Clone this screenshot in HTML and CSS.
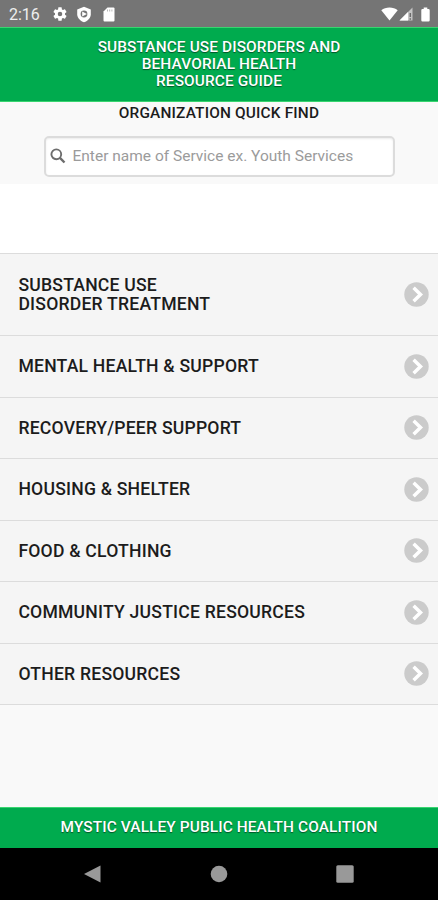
FILE: index.html
```html
<!DOCTYPE html>
<html lang="en">
<head>
<meta charset="utf-8">
<title>Resource Guide</title>
<link rel="stylesheet" href="styles.css">
</head>
<body>
<svg class="defs" width="0" height="0" aria-hidden="true">
  <symbol id="go" viewBox="0 0 25 25">
    <circle cx="12.5" cy="12.5" r="12.2" fill="#cbcbcb"/>
    <path d="M9.6 5.8l6.9 6.7-6.9 6.7" fill="none" stroke="#fff" stroke-width="3.5"/>
  </symbol>
</svg>
<div class="status">
  <span class="time">2:16</span>
  <svg class="gear" width="16" height="16" viewBox="0 0 24 24"><path fill="#fff" fill-rule="evenodd" d="M19.43 12.98c.04-.32.07-.64.07-.98s-.03-.66-.07-.98l2.11-1.65c.19-.15.24-.42.12-.64l-2-3.46c-.12-.22-.39-.3-.61-.22l-2.49 1c-.52-.4-1.08-.73-1.69-.98l-.38-2.65A.49.49 0 0 0 14 2h-4c-.25 0-.46.18-.49.42l-.38 2.65c-.61.25-1.17.59-1.69.98l-2.49-1c-.23-.09-.49 0-.61.22l-2 3.46c-.13.22-.07.49.12.64l2.11 1.65c-.04.32-.07.65-.07.98s.03.66.07.98l-2.11 1.65c-.19.15-.24.42-.12.64l2 3.46c.12.22.39.3.61.22l2.49-1c.52.4 1.08.73 1.69.98l.38 2.65c.03.24.24.42.49.42h4c.25 0 .46-.18.49-.42l.38-2.65c.61-.25 1.17-.59 1.69-.98l2.49 1c.23.09.49 0 .61-.22l2-3.46c.12-.22.07-.49-.12-.64zM12 15.4a3.4 3.4 0 1 1 0-6.8 3.4 3.4 0 0 1 0 6.8z"/></svg>
  <svg class="shield" width="16" height="17" viewBox="0 0 16 17"><path fill="#fff" d="M8 .8l6.800 2.600v4.800c0 3.600-2.800 6.600-6.800 8C4 14.800 1.200 11.800 1.200 8.200V3.400z"/><circle cx="8" cy="8" r="3.400" fill="#757575"/><path fill="#fff" d="M6.200 5.400l4.700 2.600-4.700 2.600z"/></svg>
  <svg class="card" width="12" height="15" viewBox="0 0 12 15"><path fill="#fff" d="M4.500.5H10.500q1 0 1 1v12q0 1-1 1h-9q-1 0-1-1v-9z"/><path stroke="#b8b8b8" d="M4.500 2.500v2M6.700 2.500v2M8.900 2.500v2"/></svg>
  <svg class="wifi" width="17" height="14" viewBox="0 0 17 14"><path fill="#fff" d="M8.500 13.500L.3 3.300C2.500 1.500 5.300.5 8.500.5s6 1 8.200 2.800z"/></svg>
  <svg class="cell" width="14" height="14" viewBox="0 0 14 14"><path fill="#c4c4c4" d="M13.500.5v13H.5z"/><path fill="#fff" d="M9 5v8.500H.5z"/><path stroke="#6b6b6b" stroke-width="1.500" d="M11.300 6v4M11.300 11.300v1.500"/></svg>
  <svg class="battery" width="9" height="15" viewBox="0 0 9 15"><path fill="#fff" d="M2.700.5h3.600V2H7.500q1.200 0 1.200 1.200v10q0 1.300-1.200 1.300h-6Q.3 14.500.3 13.200v-10Q.3 2 1.500 2h1.200z"/></svg>
</div>
<header class="header">
  <h1>SUBSTANCE USE DISORDERS AND<br>BEHAVORIAL HEALTH<br>RESOURCE GUIDE</h1>
</header>
<section class="find">
  <h2>ORGANIZATION QUICK FIND</h2>
  <label class="search">
    <svg width="16" height="16" viewBox="0 0 16 16" fill="none" stroke="#6d6d6d"><circle cx="6.300" cy="6.300" r="4.900" stroke-width="1.900"/><path d="M9.700 9.700l4.800 4.800" stroke-width="2.400"/></svg>
    <input type="text" placeholder="Enter name of Service ex. Youth Services">
  </label>
</section>
<nav class="list">
  <a class="row tall"><span>SUBSTANCE USE<br>DISORDER TREATMENT</span><svg><use href="#go"/></svg></a>
  <a class="row"><span>MENTAL HEALTH &amp; SUPPORT</span><svg><use href="#go"/></svg></a>
  <a class="row"><span>RECOVERY/PEER SUPPORT</span><svg><use href="#go"/></svg></a>
  <a class="row"><span>HOUSING &amp; SHELTER</span><svg><use href="#go"/></svg></a>
  <a class="row"><span>FOOD &amp; CLOTHING</span><svg><use href="#go"/></svg></a>
  <a class="row"><span>COMMUNITY JUSTICE RESOURCES</span><svg><use href="#go"/></svg></a>
  <a class="row"><span>OTHER RESOURCES</span><svg><use href="#go"/></svg></a>
</nav>
<footer class="footer">MYSTIC VALLEY PUBLIC HEALTH COALITION</footer>
<div class="navbar">
  <svg width="18" height="18" viewBox="0 0 18 18"><path fill="#999" d="M16.500.5v17L0 9z"/></svg>
  <svg width="18" height="18" viewBox="0 0 18 18"><circle cx="9" cy="9" r="8.300" fill="#999"/></svg>
  <svg width="18" height="18" viewBox="0 0 18 18"><rect x=".3" y=".3" width="17.400" height="17.400" rx="1.500" fill="#999"/></svg>
</div>
</body>
</html>
```

FILE: styles.css
```css
* { box-sizing: border-box; }
body {
  margin: 0;
  height: 900px;
  display: flex;
  flex-direction: column;
  overflow: hidden;
  background: #f9f9f9;
  font-family: Roboto, sans-serif;
  color: #1c1c1c;
}
.defs { display: none; }
.status {
  height: 27px;
  flex: none;
  display: flex;
  align-items: center;
  padding: 1px 8px 0 9px;
  background: #757575;
  color: #fff;
}
.time { width: 43px; font-size: 16px; color: #eee; }
.shield { margin-left: 8px; }
.card { margin-left: 11px; }
.wifi { margin-left: auto; }
.cell { margin-left: 1px; }
.battery { margin-left: 8px; }
.header {
  height: 75px;
  flex: none;
  padding-top: 11px;
  background: #00ab4e;
  border-top: 1px solid #38d56f;
  border-bottom: 1px solid #38d56f;
  text-align: center;
}
.header h1, .footer {
  margin: 0;
  font-size: 15.4px;
  line-height: 17px;
  font-weight: 500;
  letter-spacing: 0.12px;
  color: #fff;
  text-shadow: 0 1px 1px rgba(0, 0, 0, 0.5);
}
.find {
  height: 82px;
  flex: none;
  display: flex;
  flex-direction: column;
  align-items: center;
}
.find h2 {
  margin: 3px 0 14px;
  font-size: 15.4px;
  line-height: 17px;
  font-weight: 500;
  letter-spacing: 0.17px;
}
.search {
  width: 351px;
  height: 41px;
  display: flex;
  align-items: center;
  gap: 7px;
  padding: 0 0 1px 4px;
  background: #fff;
  border: 2px solid #dcdcdc;
  border-radius: 5px;
  box-shadow: inset 0 1px 2px #ececec;
}
.search input {
  flex: 1;
  padding: 0;
  border: 0;
  outline: 0;
  background: none;
  font: 15.5px Roboto, sans-serif;
}
.search input::placeholder { color: #9b9b9b; }
.list {
  border-top: 69px solid #fff;
  flex: none;
}
.row {
  height: 61.5px;
  display: flex;
  align-items: center;
  justify-content: space-between;
  padding: 1px 9px 0 18.4px;
  background: #f5f5f5;
  border-top: 1px solid #dcdcdc;
  font-size: 17.6px;
  line-height: 19.5px;
  font-weight: 500;
  letter-spacing: 0.21px;
}
.row.tall { height: 82px; }
.row:last-child { height: 62.5px; border-bottom: 1px solid #dcdcdc; }
.row svg { width: 25px; height: 25px; margin-bottom: 1px; }
.footer {
  height: 41px;
  flex: none;
  margin-top: auto;
  padding-top: 11px;
  background: #00ab4e;
  border-top: 1px solid #38d56f;
  text-align: center;
}
.navbar {
  height: 52px;
  flex: none;
  display: flex;
  justify-content: space-between;
  align-items: center;
  padding: 0 84px;
  background: #000;
}
```
